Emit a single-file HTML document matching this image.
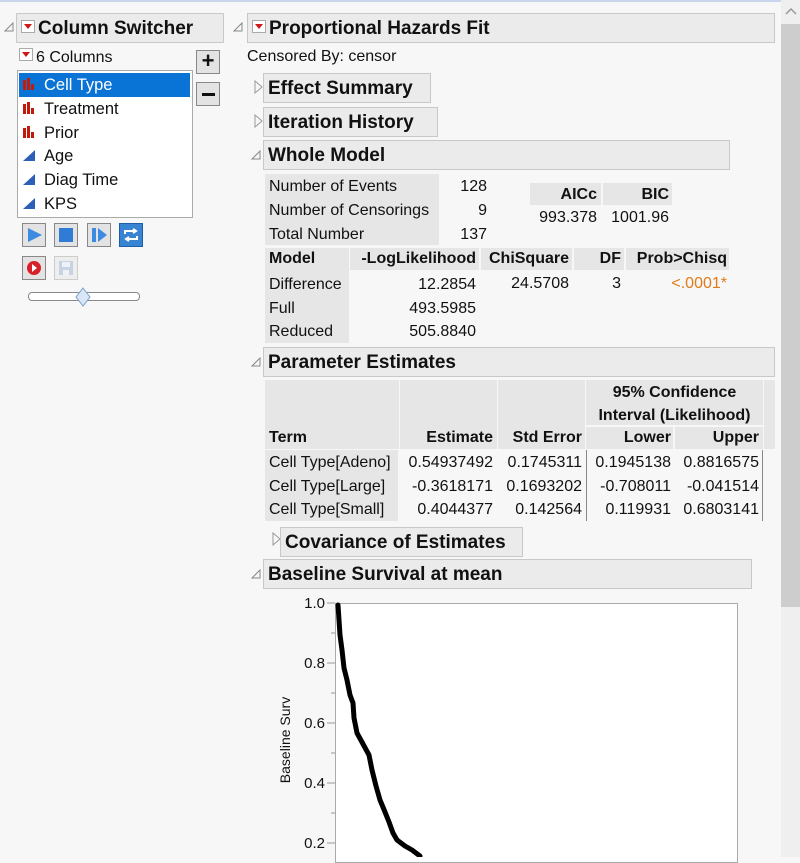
<!DOCTYPE html>
<html><head><meta charset="utf-8"><style>
*{margin:0;padding:0;box-sizing:border-box}
body{width:800px;height:857px;overflow:hidden;background:#f7f7f7;font-family:"Liberation Sans",sans-serif;color:#111;position:relative;font-size:16px}
.a{position:absolute;white-space:nowrap}
.hdr{position:absolute;background:#ebebeb;border:1px solid #c8c8c8;font-weight:bold;font-size:19px;line-height:29px;padding-left:4px}
.dd{display:inline-block;width:14px;height:13px;border:1px solid #aaa;background:#fff;position:relative;vertical-align:1px;margin-right:3px}
.dd:after{content:"";position:absolute;left:2px;top:3px;border-left:4px solid transparent;border-right:4px solid transparent;border-top:5px solid #d01818}
.g{background:#e6e6e6}
.b{font-weight:bold}
.r{text-align:right}
.btn{position:absolute;width:24px;height:24px;border:1px solid #888;background:#e3e3e3}
</style></head><body>
<div class="a" style="left:0;top:0;width:800px;height:2px;background:#c9d6ee"></div>
<!-- left panel -->
<svg class="a" style="left:4px;top:22px" width="10" height="10"><path d="M9 1 L9 9 L1 9 Z" fill="none" stroke="#888"/></svg>
<div class="hdr" style="left:16px;top:13px;width:208px;height:30px"><span class="dd"></span>Column Switcher</div>
<div class="a" style="left:19px;top:48px;font-size:16px"><span class="dd"></span>6 Columns</div>
<div class="btn" style="left:196px;top:50px;font-weight:bold;font-size:22px;line-height:20px;text-align:center">+</div>
<div class="btn" style="left:196px;top:82px"><div style="position:absolute;left:5px;top:10px;width:13px;height:3px;background:#111"></div></div>
<div class="a" style="left:17px;top:70px;width:176px;height:148px;background:#fff;border:1px solid #aaa"></div>
<div class="a" style="left:19px;top:73px;width:171px;height:24px;background:#0a74d6"></div>
<div class="a" style="left:22px;top:74px;font-size:16.5px;line-height:23.8px">
<div style="color:#fff"><span style="display:inline-block;width:22px"><svg width="14" height="12"><path d="M1 2h3v10H1zM5 0h3v12H5zM9 6h3v6H9z" fill="#c21b0c"/></svg></span>Cell Type</div>
<div><span style="display:inline-block;width:22px"><svg width="14" height="12"><path d="M1 2h3v10H1zM5 0h3v12H5zM9 6h3v6H9z" fill="#c21b0c"/></svg></span>Treatment</div>
<div><span style="display:inline-block;width:22px"><svg width="14" height="12"><path d="M1 2h3v10H1zM5 0h3v12H5zM9 6h3v6H9z" fill="#c21b0c"/></svg></span>Prior</div>
<div><span style="display:inline-block;width:22px"><svg width="14" height="12"><path d="M1 12L13 1V12Z" fill="#2c5fb5"/></svg></span>Age</div>
<div><span style="display:inline-block;width:22px"><svg width="14" height="12"><path d="M1 12L13 1V12Z" fill="#2c5fb5"/></svg></span>Diag Time</div>
<div><span style="display:inline-block;width:22px"><svg width="14" height="12"><path d="M1 12L13 1V12Z" fill="#2c5fb5"/></svg></span>KPS</div>
</div>
<div class="btn" style="left:22px;top:223px"><svg width="22" height="22"><path d="M5 4L19 11L5 18Z" fill="#3d8be0"/></svg></div>
<div class="btn" style="left:54px;top:223px"><svg width="22" height="22"><rect x="4" y="4" width="14" height="14" fill="#2f7bd6"/></svg></div>
<div class="btn" style="left:87px;top:223px"><svg width="22" height="22"><rect x="4" y="4" width="4" height="14" fill="#3d8be0"/><path d="M10 4L19 11L10 18Z" fill="#3d8be0"/></svg></div>
<div class="btn" style="left:119px;top:223px;background:#3884d2;border-color:#1d5fa6"><svg width="22" height="22"><path d="M5 10V7h10M13 5l3 2-3 2M17 12v3H7M9 13l-3 2 3 2" fill="none" stroke="#fff" stroke-width="2"/></svg></div>
<div class="btn" style="left:22px;top:256px"><svg width="22" height="22"><circle cx="11" cy="11" r="7" fill="#d8202a"/><path d="M9 7l5 4-5 4Z" fill="#fff"/></svg></div>
<div class="btn" style="left:54px;top:256px;border-color:#ccc;background:#eee"><svg width="22" height="22"><rect x="4" y="4" width="14" height="14" fill="#c7d3e3"/><rect x="7" y="5" width="8" height="5" fill="#eef2f7"/><rect x="8" y="13" width="6" height="5" fill="#eef2f7"/></svg></div>
<div class="a" style="left:28px;top:292px;width:112px;height:9px;border:1px solid #888;border-radius:4px;background:#fff"></div>
<svg class="a" style="left:74px;top:287px" width="18" height="20"><path d="M9 1L16 10L9 19L2 10Z" fill="#d8e6f7" stroke="#7ea1cc"/></svg>

<!-- right -->
<svg class="a" style="left:233px;top:22px" width="10" height="10"><path d="M9 1 L9 9 L1 9 Z" fill="none" stroke="#888"/></svg>
<div class="hdr" style="left:247px;top:13px;width:528px;height:30px"><span class="dd"></span>Proportional Hazards Fit</div>
<div class="a" style="left:247px;top:48px;font-size:16px">Censored By: censor</div>

<svg class="a" style="left:254px;top:80px" width="10" height="14"><path d="M1 1L8 7L1 13Z" fill="none" stroke="#999"/></svg>
<div class="hdr" style="left:263px;top:73px;width:168px;height:30px">Effect Summary</div>
<svg class="a" style="left:254px;top:114px" width="10" height="14"><path d="M1 1L8 7L1 13Z" fill="none" stroke="#999"/></svg>
<div class="hdr" style="left:263px;top:107px;width:175px;height:30px">Iteration History</div>
<svg class="a" style="left:251px;top:150px" width="10" height="10"><path d="M9 1 L9 9 L1 9 Z" fill="none" stroke="#888"/></svg>
<div class="hdr" style="left:263px;top:140px;width:467px;height:30px">Whole Model</div>

<div class="a g" style="left:265px;top:174px;width:174px;height:71px"></div>
<div class="a" style="left:269px;top:175px;line-height:24px">Number of Events<br>Number of Censorings<br>Total Number</div>
<div class="a r" style="left:440px;top:175px;width:47px;line-height:24px">128<br>9<br>137</div>
<div class="a g" style="left:530px;top:183px;width:71px;height:22px"></div>
<div class="a g" style="left:603px;top:183px;width:69px;height:22px"></div>
<div class="a b r" style="left:530px;top:184px;width:67px;line-height:22px">AICc</div>
<div class="a b r" style="left:603px;top:184px;width:66px;line-height:22px">BIC</div>
<div class="a r" style="left:530px;top:209px;width:67px">993.378</div>
<div class="a r" style="left:603px;top:209px;width:66px">1001.96</div>

<div class="a g" style="left:265px;top:248px;width:84px;height:95px"></div>
<div class="a g" style="left:350px;top:248px;width:129px;height:22px"></div>
<div class="a g" style="left:481px;top:248px;width:91px;height:22px"></div>
<div class="a g" style="left:574px;top:248px;width:50px;height:22px"></div>
<div class="a g" style="left:626px;top:248px;width:103px;height:22px"></div>
<div class="a b" style="left:269px;top:250px">Model</div>
<div class="a b r" style="left:350px;top:250px;width:126px">-LogLikelihood</div>
<div class="a b r" style="left:481px;top:250px;width:88px">ChiSquare</div>
<div class="a b r" style="left:574px;top:250px;width:47px">DF</div>
<div class="a b r" style="left:626px;top:250px;width:101px">Prob&gt;Chisq</div>
<div class="a" style="left:269px;top:273px;line-height:23.5px">Difference<br>Full<br>Reduced</div>
<div class="a r" style="left:380px;top:273px;width:96px;line-height:23.5px">12.2854<br>493.5985<br>505.8840</div>
<div class="a r" style="left:481px;top:275px;width:88px">24.5708</div>
<div class="a r" style="left:574px;top:275px;width:47px">3</div>
<div class="a r" style="left:626px;top:275px;width:101px;color:#e07b1a">&lt;.0001*</div>

<svg class="a" style="left:251px;top:357px" width="10" height="10"><path d="M9 1 L9 9 L1 9 Z" fill="none" stroke="#888"/></svg>
<div class="hdr" style="left:263px;top:347px;width:512px;height:30px">Parameter Estimates</div>
<div class="a g" style="left:265px;top:380px;width:134px;height:69px"></div>
<div class="a g" style="left:400px;top:380px;width:97px;height:69px"></div>
<div class="a g" style="left:498px;top:380px;width:87px;height:69px"></div>
<div class="a g" style="left:586px;top:380px;width:177px;height:45px"></div>
<div class="a g" style="left:586px;top:427px;width:87px;height:22px"></div>
<div class="a g" style="left:675px;top:427px;width:88px;height:22px"></div>
<div class="a g" style="left:764px;top:380px;width:11px;height:69px"></div>
<div class="a b" style="left:586px;top:381px;width:177px;text-align:center;line-height:23px">95% Confidence<br>Interval (Likelihood)</div>
<div class="a b" style="left:269px;top:429px">Term</div>
<div class="a b r" style="left:400px;top:429px;width:93px">Estimate</div>
<div class="a b r" style="left:498px;top:429px;width:84px">Std Error</div>
<div class="a b r" style="left:586px;top:429px;width:85px">Lower</div>
<div class="a b r" style="left:675px;top:429px;width:84px">Upper</div>
<div class="a g" style="left:265px;top:450px;width:133px;height:71px"></div>
<div class="a" style="left:269px;top:451px;line-height:23.5px">Cell Type[Adeno]<br>Cell Type[Large]<br>Cell Type[Small]</div>
<div class="a r" style="left:400px;top:451px;width:93px;line-height:23.5px">0.54937492<br>-0.3618171<br>0.4044377</div>
<div class="a r" style="left:498px;top:451px;width:84px;line-height:23.5px">0.1745311<br>0.1693202<br>0.142564</div>
<div class="a" style="left:586px;top:450px;width:1px;height:71px;background:#888"></div>
<div class="a r" style="left:586px;top:451px;width:85px;line-height:23.5px">0.1945138<br>-0.708011<br>0.119931</div>
<div class="a r" style="left:675px;top:451px;width:84px;line-height:23.5px">0.8816575<br>-0.041514<br>0.6803141</div>
<div class="a" style="left:762px;top:450px;width:1px;height:71px;background:#888"></div>

<svg class="a" style="left:272px;top:532px" width="10" height="14"><path d="M1 1L8 7L1 13Z" fill="none" stroke="#999"/></svg>
<div class="hdr" style="left:280px;top:527px;width:243px;height:30px">Covariance of Estimates</div>
<svg class="a" style="left:251px;top:569px" width="10" height="10"><path d="M9 1 L9 9 L1 9 Z" fill="none" stroke="#888"/></svg>
<div class="hdr" style="left:263px;top:559px;width:489px;height:30px">Baseline Survival at mean</div>

<div class="a" style="left:335px;top:603px;width:403px;height:260px;background:#fff;border:1px solid #aaa"></div>
<svg class="a" style="left:260px;top:590px" width="540" height="267">
<g stroke="#999"><line x1="67" y1="13" x2="75" y2="13"/><line x1="71" y1="43" x2="75" y2="43"/><line x1="67" y1="73" x2="75" y2="73"/><line x1="71" y1="103" x2="75" y2="103"/><line x1="67" y1="133" x2="75" y2="133"/><line x1="71" y1="163" x2="75" y2="163"/><line x1="67" y1="193" x2="75" y2="193"/><line x1="71" y1="223" x2="75" y2="223"/><line x1="67" y1="253" x2="75" y2="253"/></g>
<g font-family="Liberation Sans" font-size="15" fill="#111" text-anchor="end"><text x="65" y="18">1.0</text><text x="65" y="78">0.8</text><text x="65" y="138">0.6</text><text x="65" y="198">0.4</text><text x="65" y="258">0.2</text></g>
<text transform="translate(30,150) rotate(-90)" font-family="Liberation Sans" font-size="14" fill="#111" text-anchor="middle">Baseline Surv</text>
<path d="M78 15L79 30L80 45L82 60L84 78L87 90L90 105L93 113L94 128L97 143L103 154L109 165L112 180L116 196L120 210L125 222L129 232L133 243L137 250L145 256L152 260L160 266" fill="none" stroke="#000" stroke-width="5" stroke-linecap="round" stroke-linejoin="round"/>
</svg>

<!-- scrollbar -->
<div class="a" style="left:781px;top:0;width:19px;height:857px;background:#efefef"></div>
<div class="a" style="left:781px;top:24px;width:19px;height:583px;background:#cdcdcd"></div>
<svg class="a" style="left:785px;top:8px" width="12" height="8"><path d="M1 6L6 1L11 6" fill="none" stroke="#999" stroke-width="1.5"/></svg>
</body></html>
